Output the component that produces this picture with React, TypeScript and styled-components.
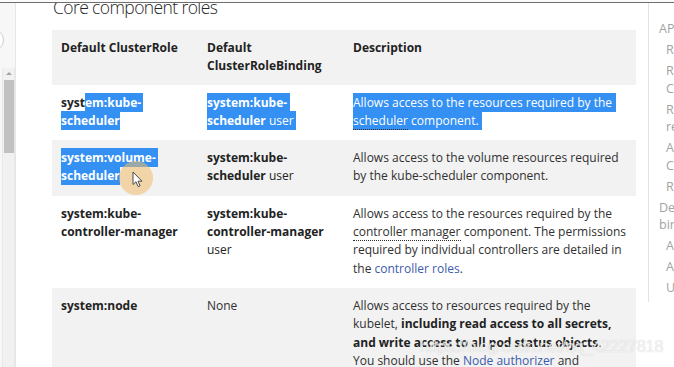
import React from "react";
import styled, { createGlobalStyle } from "styled-components";

const Global = createGlobalStyle`
  html, body { margin: 0; padding: 0; background: #fff; }
  body { font-family: "Open Sans", "DejaVu Sans", sans-serif; }
`;

const Frame = styled.div`
  position: relative;
  width: 674px;
  height: 367px;
  overflow: hidden;
  background: #fff;
`;

const TopEdge = styled.div`
  height: 2px;
  background: #fbfbfb;
  border-bottom: 1px solid #6f6f6f;
  position: relative;
  z-index: 1;
`;

const Body = styled.div`
  display: flex;
  height: 364px;
  overflow: hidden;
`;

const LeftRail = styled.div`
  width: 15px;
  flex: none;
  background: #f7f7f7;
  border-right: 1px solid #e6e6e6;
  display: flex;
  flex-direction: column;
  align-items: flex-start;
`;

const SearchEdge = styled.div`
  margin: 26px 0 0 -20px;
  width: 22px;
  height: 20px;
  border: 1px solid #cfcfcf;
  border-radius: 0 11px 11px 0;
  background: #fff;
`;

const ScrollTrack = styled.div`
  margin: 17px 0 0 2px;
  width: 11px;
  flex: 1;
  background: #f1f1f1;
  border-left: 1px solid #e8e8e8;
  border-right: 1px solid #e8e8e8;
  display: flex;
  flex-direction: column;
  align-items: center;
`;

const ScrollArrow = styled.div`
  margin-top: 4px;
  width: 0;
  height: 0;
  border-left: 3px solid transparent;
  border-right: 3px solid transparent;
  border-bottom: 3px solid #a3a3a3;
`;

const ScrollThumb = styled.div`
  margin-top: 5px;
  width: 10px;
  height: 73px;
  background: #c1c1c1;
`;

const Main = styled.div`
  width: 632px;
  flex: none;
  padding: 0 12px 0 36px;
  box-sizing: border-box;
  color: #303030;
`;

const Title = styled.h2`
  margin: -6.8px 0 11.8px 1px;
  font-size: 17.5px;
  line-height: 22px;
  letter-spacing: -0.6px;
  font-weight: 300;
  color: #262626;
  white-space: nowrap;
`;

const Table = styled.table`
  width: 584px;
  border-collapse: collapse;
  table-layout: fixed;
  font-size: 12px;
  line-height: 18.3px;
`;

const Row = styled.tr<{ $shade?: boolean }>`
  background: ${(p) => (p.$shade ? "#f2f2f2" : "#ffffff")};
`;

const HeadCell = styled.th`
  text-align: left;
  vertical-align: top;
  padding: 9px 9px;
  font-weight: 700;
  color: #222;
`;

const Cell = styled.td<{ $bold?: boolean }>`
  vertical-align: top;
  padding: 9px 9px 10px;
  font-weight: ${(p) => (p.$bold ? 700 : 400)};
  color: ${(p) => (p.$bold ? "#222" : "#303030")};
`;

const Sel = styled.span<{ $tail?: number }>`
  background: #3490f3;
  color: #fff;
  padding: 1px ${(p) => p.$tail ?? 0}px 1px 0;
`;

const Term = styled.span`
  border-bottom: 1px dotted #303030;
`;

const Plain = styled.span`
  font-weight: 400;
`;

const Strong = styled.b`
  font-weight: 700;
  color: #222;
`;

const Link = styled.a`
  color: #3b5bab;
  text-decoration: none;
`;

const Toc = styled.nav`
  flex: none;
  width: 40px;
  height: 299px;
  border-left: 1px solid #e3e3e3;
  padding: 17px 0 0 10px;
  box-sizing: border-box;
  font-size: 12.5px;
  line-height: 17.5px;
  color: #a3a3a3;
  white-space: nowrap;
`;

const TocItem = styled.div<{ $nested?: boolean }>`
  padding-left: ${(p) => (p.$nested ? 7 : 0)}px;
  margin-bottom: 3.5px;
`;

const Cursor = styled.div`
  position: absolute;
  left: 119px;
  top: 161px;
  width: 34px;
  height: 34px;
  border-radius: 50%;
  background: rgba(240, 188, 105, 0.55);
`;

const Pointer = styled.svg`
  position: absolute;
  left: 132px;
  top: 171px;
`;

const Watermark = styled.div`
  position: absolute;
  left: 420px;
  top: 337px;
  font-family: "Liberation Sans", Arial, sans-serif;
  font-size: 16.5px;
  letter-spacing: -0.3px;
  color: rgba(255, 255, 255, 0.72);
  text-shadow: 0 0 1px rgba(160, 160, 160, 0.55);
  white-space: nowrap;
`;

const tocItems: { lines: string[]; nested?: boolean }[] = [
  { lines: ["API objects"] },
  { lines: ["Role and ClusterRole"], nested: true },
  { lines: ["RoleBinding and", "ClusterRoleBinding"], nested: true },
  { lines: ["Referring to", "resources"], nested: true },
  { lines: ["Aggregated", "ClusterRoles"], nested: true },
  { lines: ["Role examples"], nested: true },
  { lines: ["Default roles and role", "bindings"] },
  { lines: ["Auto-reconciliation"], nested: true },
  { lines: ["API discovery roles"], nested: true },
  { lines: ["User-facing roles"], nested: true },
];

export default function App() {
  return (
    <Frame>
      <Global />
      <TopEdge />
      <Body>
        <LeftRail>
          <SearchEdge />
          <ScrollTrack>
            <ScrollArrow />
            <ScrollThumb />
          </ScrollTrack>
        </LeftRail>
        <Main>
          <Title>Core component roles</Title>
          <Table>
            <colgroup>
              <col style={{ width: 146 }} />
              <col style={{ width: 146 }} />
              <col style={{ width: 292 }} />
            </colgroup>
            <thead>
              <Row $shade>
                <HeadCell>Default ClusterRole</HeadCell>
                <HeadCell>
                  Default
                  <br />
                  ClusterRoleBinding
                </HeadCell>
                <HeadCell>Description</HeadCell>
              </Row>
            </thead>
            <tbody>
              <Row>
                <Cell $bold>
                  syst<Sel $tail={2}>em:kube-</Sel>
                  <br />
                  <Sel>scheduler</Sel>
                </Cell>
                <Cell $bold>
                  <Sel $tail={3}>system:kube-</Sel>
                  <br />
                  <Sel $tail={2}>
                    scheduler <Plain>user</Plain>
                  </Sel>
                </Cell>
                <Cell>
                  <Sel $tail={4}>Allows access to the resources required by the</Sel>
                  <br />
                  <Sel $tail={3}>
                    <Term>scheduler</Term> component.
                  </Sel>
                </Cell>
              </Row>
              <Row $shade>
                <Cell $bold>
                  <Sel $tail={2}>system:volume-</Sel>
                  <br />
                  <Sel>scheduler</Sel>
                </Cell>
                <Cell $bold>
                  system:kube-
                  <br />
                  scheduler <Plain>user</Plain>
                </Cell>
                <Cell>
                  Allows access to the volume resources required
                  <br />
                  by the kube-scheduler component.
                </Cell>
              </Row>
              <Row>
                <Cell $bold>
                  system:kube-
                  <br />
                  controller-manager
                </Cell>
                <Cell $bold>
                  system:kube-
                  <br />
                  controller-manager
                  <br />
                  <Plain>user</Plain>
                </Cell>
                <Cell>
                  Allows access to the resources required by the
                  <br />
                  <Term>controller manager</Term> component. The permissions
                  <br />
                  required by individual controllers are detailed in
                  <br />
                  the <Link href="#controller-roles">controller roles</Link>.
                </Cell>
              </Row>
              <Row $shade>
                <Cell $bold>system:node</Cell>
                <Cell>None</Cell>
                <Cell>
                  Allows access to resources required by the
                  <br />
                  kubelet, <Strong>including read access to all secrets,</Strong>
                  <br />
                  <Strong>and write access to all pod status objects</Strong>.
                  <br />
                  You should use the <Link href="#node-authorizer">Node authorizer</Link> and
                  <br />
                  NodeRestriction admission plugin instead of
                </Cell>
              </Row>
            </tbody>
          </Table>
        </Main>
        <Toc>
          {tocItems.map((item, i) => (
            <TocItem key={i} $nested={item.nested}>
              {item.lines.map((l, j) => (
                <div key={j}>{l}</div>
              ))}
            </TocItem>
          ))}
        </Toc>
      </Body>
      <Cursor />
      <Pointer width="12" height="17" viewBox="0 0 12 17">
        <path
          d="M1 1 L1 13.5 L4 10.8 L6.2 15.6 L8.1 14.8 L6 10.2 L10 10.2 Z"
          fill="#ffffff"
          stroke="#4a4a4a"
          strokeWidth="1"
          strokeLinejoin="round"
        />
      </Pointer>
      <Watermark>https://blog.csdn.net/qq_42227818</Watermark>
    </Frame>
  );
}
